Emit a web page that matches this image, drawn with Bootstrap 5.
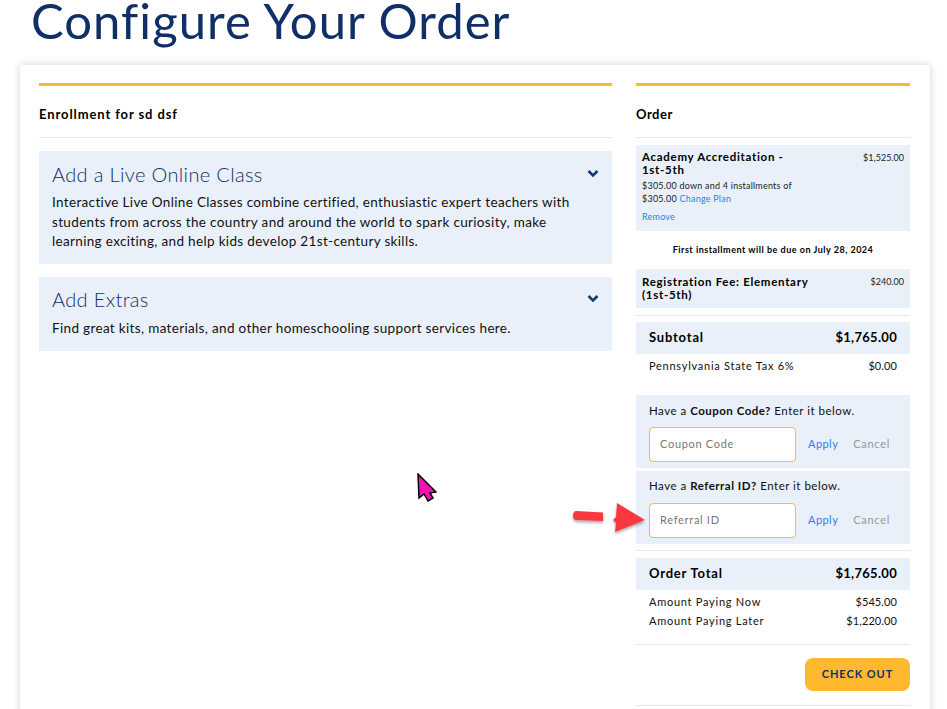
<!DOCTYPE html>
<html lang="en"><head><meta charset="utf-8"><title>Configure Your Order</title>
<link href="https://cdn.jsdelivr.net/npm/bootstrap@5.3.0/dist/css/bootstrap.min.css" rel="stylesheet">
<style>
html,body{height:709px;overflow:hidden;background:#fff}
body{font-family:Lato,"Liberation Sans",sans-serif;color:#000;position:relative}
.page-title{font-family:Lato,sans-serif;font-weight:400;font-size:49px;line-height:40px;height:65px;margin:0;padding:0 0 0 31px;color:#0f2f66;letter-spacing:1.05px}
.sheet{margin:0 17px 0 20px;height:700px;padding:18px 20px 0 19px;box-shadow:0 0 8px rgba(0,0,0,.18);gap:24px}
.main-col{width:573px}
.side-col{width:274px}
.gold-bar{height:3px;background:#ffb92e}
.col-head{height:52px;border-bottom:1px solid #e5e7eb;font-weight:700;font-size:13px;letter-spacing:.5px;line-height:17px;padding-top:20px;margin-bottom:13px}
.main-col .col-head{letter-spacing:.9px}
.side-col .col-head{margin-bottom:7px}
.addon{background:#e9f0f9;padding:10px 13px 0;margin-bottom:13px;color:#111}
.addon-one{height:113px}.addon-two{height:74px;margin-bottom:0;padding-top:9px}
.addon-title{font-size:20px;font-weight:300;line-height:26px;color:#0f2f66;letter-spacing:.35px;margin:0 0 6px}
.addon-two .addon-title{margin-bottom:7px}
.addon-text{font-size:13.5px;line-height:19.5px;letter-spacing:.34px;margin:0;max-width:530px}
.chev{width:12px;height:9px;margin:8px 0 0}
.item{background:#e9f0f9;padding:6px 6px 0}
.item-one{height:86px}.item-two{height:39px}
.item-name{font-weight:700;font-size:11.5px;line-height:13px;letter-spacing:.7px;width:150px}
.item-one .item-name{margin-top:-1px}
.item-two .item-name{width:178px}
.item-price{font-size:9px;line-height:13px;color:#222;letter-spacing:.02px}
.item-sub{font-size:9px;line-height:13px;letter-spacing:.22px;color:#222;margin-top:3px;width:170px}
.item-link{color:#2f7bf5;text-decoration:none;font-size:9px;letter-spacing:.22px}
.item-remove{display:block;margin-top:5px;line-height:13px}
.due{height:38px;font-size:9px;font-weight:700;letter-spacing:.5px;text-align:center;line-height:38px}
.rule{height:1px;background:#e5e7eb}
.rule-a{margin:7px 0 6px}
.rule-c{margin:6px 0 7px}
.rule-d{margin-top:15px}
.rule-e{margin-top:14px}
.total-bar{background:#e9f0f9;height:32px;padding:0 13px;font-weight:700;font-size:13px;letter-spacing:.3px}
.total-bar span:first-child{letter-spacing:.8px}
.line-row{padding:0 13px;font-size:11px;line-height:16px;letter-spacing:.1px;color:#111}
.line-row span:first-child{letter-spacing:.74px}
.tax-row{margin:4px 0 21px}
.pay-one{margin-top:4px}.pay-two{margin-top:3px}
.promo{background:#e9f0f9;height:73px;padding:8px 13px 0;font-size:11.5px;line-height:16px;letter-spacing:.5px;color:#111}
.promo-b{margin-top:3px;padding-top:7px}
.promo-field{width:147px;height:35px;border:1px solid #ffb92e;border-radius:4px;font-size:11px;padding:0 10px 2px;letter-spacing:.7px;box-shadow:none}
.promo-field::placeholder{color:#777}
.promo-row{margin-top:8px}
.promo-b .promo-row{margin-top:9px}
.apply{color:#2f7bf5;text-decoration:none;font-size:11px;letter-spacing:.45px;margin:0 0 2px 12px}
.cancel{color:#999;text-decoration:none;font-size:11px;letter-spacing:.7px;margin:0 0 2px 15px}
.btn-wrap{margin-top:13px}
.pay-btn{width:105px;height:33px;background:#ffb92e;border:0;border-radius:8px;color:#12306a;font-weight:700;font-size:11px;letter-spacing:.95px;padding:0}
.overlay{position:absolute;pointer-events:none}
.annot-arrow{left:570px;top:500px;width:80px;height:36px}
.annot-cursor{left:417px;top:473px;width:20px;height:29px}
</style></head>
<body>
<h1 class="page-title">Configure Your Order</h1>
<div class="sheet d-flex bg-white">
  <div class="main-col">
    <div class="gold-bar"></div>
    <div class="col-head">Enrollment for sd dsf</div>
    <div class="addon addon-one">
      <div class="d-flex justify-content-between"><h2 class="addon-title">Add a Live Online Class</h2>
        <svg class="chev" viewBox="0 0 12 9"><path d="M1.5 2 6 6.500 10.500 2" fill="none" stroke="#123a73" stroke-width="2.6"/></svg></div>
      <p class="addon-text">Interactive Live Online Classes combine certified, enthusiastic expert teachers with students from across the country and around the world to spark curiosity, make learning exciting, and help kids develop 21st-century skills.</p>
    </div>
    <div class="addon addon-two">
      <div class="d-flex justify-content-between"><h2 class="addon-title">Add Extras</h2>
        <svg class="chev" viewBox="0 0 12 9"><path d="M1.5 2 6 6.500 10.500 2" fill="none" stroke="#123a73" stroke-width="2.6"/></svg></div>
      <p class="addon-text">Find great kits, materials, and other homeschooling support services here.</p>
    </div>
  </div>
  <div class="side-col">
    <div class="gold-bar"></div>
    <div class="col-head">Order</div>
    <div class="item item-one d-flex justify-content-between">
      <div><div class="item-name">Academy Accreditation - 1st-5th</div>
        <div class="item-sub">$305.00 down and 4 installments of $305.00 <a class="item-link" href="#">Change Plan</a></div>
        <a class="item-link item-remove" href="#">Remove</a></div>
      <div class="item-price">$1,525.00</div>
    </div>
    <div class="due">First installment will be due on July 28, 2024</div>
    <div class="item item-two d-flex justify-content-between">
      <div class="item-name">Registration Fee: Elementary (1st-5th)</div>
      <div class="item-price">$240.00</div>
    </div>
    <div class="rule rule-a"></div>
    <div class="total-bar d-flex justify-content-between align-items-center"><span>Subtotal</span><span>$1,765.00</span></div>
    <div class="line-row d-flex justify-content-between tax-row"><span>Pennsylvania State Tax 6%</span><span>$0.00</span></div>
    <div class="promo">Have a <b>Coupon Code?</b> Enter it below.
      <div class="promo-row d-flex align-items-center"><input class="form-control promo-field" placeholder="Coupon Code" aria-label="Coupon Code"><a class="apply" href="#">Apply</a><a class="cancel" href="#">Cancel</a></div></div>
    <div class="promo promo-b">Have a <b>Referral ID?</b> Enter it below.
      <div class="promo-row d-flex align-items-center"><input class="form-control promo-field" placeholder="Referral ID" aria-label="Referral ID"><a class="apply" href="#">Apply</a><a class="cancel" href="#">Cancel</a></div></div>
    <div class="rule rule-c"></div>
    <div class="total-bar d-flex justify-content-between align-items-center"><span>Order Total</span><span>$1,765.00</span></div>
    <div class="line-row d-flex justify-content-between pay-one"><span>Amount Paying Now</span><span>$545.00</span></div>
    <div class="line-row d-flex justify-content-between pay-two"><span>Amount Paying Later</span><span>$1,220.00</span></div>
    <div class="rule rule-d"></div>
    <div class="d-flex justify-content-end btn-wrap"><button class="btn pay-btn">CHECK OUT</button></div>
    <div class="rule rule-e"></div>
  </div>
</div>
<svg class="overlay annot-arrow" viewBox="0 0 80 36" aria-hidden="true"><defs><filter id="sh" x="-20%" y="-30%" width="140%" height="170%"><feDropShadow dx="0" dy="2" stdDeviation="1.5" flood-color="#000" flood-opacity=".35"/></filter></defs><g fill="#f8383f" filter="url(#sh)"><path d="M6 11 33 12.500V21L6 20Q3 19.500 3 15.500T6 11z"/><path d="M47 3 75 20 45 32 46 23 43 20 46 17z"/></g></svg>
<svg class="overlay annot-cursor" viewBox="0 0 20 29" aria-hidden="true"><path d="M1 1 19 19 13 20 16 25 11 28 7 21 2 25z" fill="#f014b4" stroke="#000" stroke-width="1.500"/></svg>
</body></html>
